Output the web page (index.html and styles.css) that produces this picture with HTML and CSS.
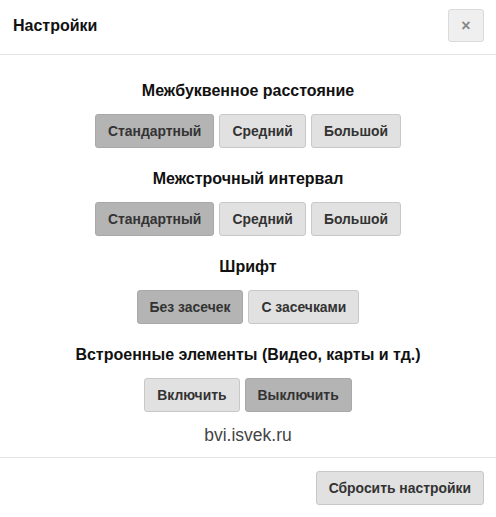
FILE: index.html
```html
<!DOCTYPE html>
<html lang="ru">
<head>
<meta charset="utf-8">
<title>Настройки</title>
<link rel="stylesheet" href="styles.css">
</head>
<body>
<div class="modal">
  <div class="modal-header">
    <div class="modal-title">Настройки</div>
    <button class="close-btn" type="button">×</button>
  </div>
  <div class="modal-body">
    <div class="section">
      <div class="section-title">Межбуквенное расстояние</div>
      <div class="btn-group">
        <button class="btn active">Стандартный</button>
        <button class="btn">Средний</button>
        <button class="btn">Большой</button>
      </div>
    </div>
    <div class="section">
      <div class="section-title">Межстрочный интервал</div>
      <div class="btn-group">
        <button class="btn active">Стандартный</button>
        <button class="btn">Средний</button>
        <button class="btn">Большой</button>
      </div>
    </div>
    <div class="section">
      <div class="section-title">Шрифт</div>
      <div class="btn-group">
        <button class="btn active">Без засечек</button>
        <button class="btn">С засечками</button>
      </div>
    </div>
    <div class="section last">
      <div class="section-title">Встроенные элементы (Видео, карты и тд.)</div>
      <div class="btn-group">
        <button class="btn">Включить</button>
        <button class="btn active">Выключить</button>
      </div>
    </div>
    <div class="site">bvi.isvek.ru</div>
  </div>
  <div class="modal-footer">
    <button class="btn">Сбросить настройки</button>
  </div>
</div>
</body>
</html>
```
FILE: styles.css
```css
html, body {
  margin: 0;
  padding: 0;
  background: #fff;
}
body {
  font-family: "Liberation Sans", Arial, sans-serif;
  color: #222;
}
.modal {
  width: 496px;
}
.modal-header {
  display: flex;
  align-items: center;
  justify-content: space-between;
  height: 55px;
  padding: 0 12px 0 13px;
  box-sizing: border-box;
  border-bottom: 1px solid #e3e3e3;
}
.modal-title {
  font-size: 16px;
  font-weight: bold;
  color: #111;
  margin-top: -2px;
}
.close-btn {
  width: 36px;
  height: 33px;
  margin-top: -3px;
  background: #efefef;
  border: 1px solid #dadada;
  border-radius: 3px;
  color: #888;
  font-family: "Liberation Sans", Arial, sans-serif;
  font-size: 16px;
  font-weight: bold;
  padding: 0;
  line-height: 1;
}
.modal-body {
  padding: 26px 12px 12px;
  display: flex;
  flex-direction: column;
  align-items: center;
  border-bottom: 1px solid #e3e3e3;
}
.section {
  display: flex;
  flex-direction: column;
  align-items: center;
  margin-bottom: 21px;
}
.section.last {
  margin-bottom: 13px;
}
.section-title {
  font-size: 16px;
  font-weight: bold;
  line-height: 20px;
  color: #111;
  margin-bottom: 13px;
}
.btn-group {
  display: flex;
  gap: 5px;
}
.btn {
  height: 34px;
  padding: 0 12px;
  font-family: "Liberation Sans", Arial, sans-serif;
  font-size: 13.9px;
  font-weight: bold;
  color: #333;
  background: #e1e1e1;
  border: 1px solid #c8c8c8;
  border-radius: 3px;
}
.btn.active {
  background: #b4b4b4;
  border-color: #a8a8a8;
}
.site {
  font-size: 17.5px;
  line-height: 20px;
  color: #444;
}
.modal-footer {
  display: flex;
  justify-content: flex-end;
  padding: 13px 12px;
}
```
